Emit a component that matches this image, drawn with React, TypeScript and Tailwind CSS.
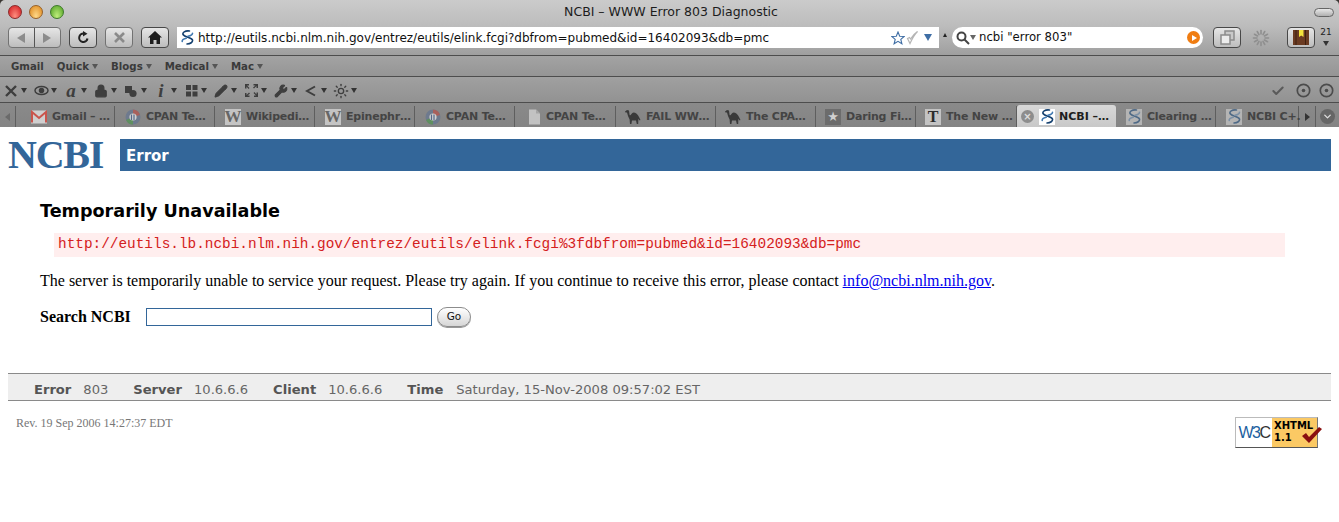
import { ReactNode } from 'react';
import { ChevronDown, Wrench, Pencil, Sun, Lock, Check } from 'lucide-react';

const chrome = "font-['DejaVu_Sans',sans-serif]";

function Helix({ faded = false }: { faded?: boolean }) {
  const dark = faded ? '#4f6a86' : '#14406f';
  const light = faded ? '#7b90a6' : '#3f78b0';
  return (
    <span className={`flex h-4 w-4 shrink-0 items-center justify-center ${faded ? 'bg-[#b4b4b4]' : 'bg-white'}`}>
      <svg width="15" height="15" viewBox="0 0 15 15" fill="none" strokeWidth="1.6" strokeLinecap="round">
        <path d="M9.5 1C5 .5 2 2.5 3.2 4.8C5 7.5 11.5 7 12.5 10C13 12 10.5 14 7 14" stroke={dark} />
        <path d="M12.5 3.2C12.5 5 10 5.8 8 6.3" stroke={light} />
        <path d="M2.2 11.5C2 9.8 4 8.8 6.2 8.3" stroke={light} />
      </svg>
    </span>
  );
}

function Camel() {
  return (
    <svg width="16" height="16" viewBox="0 0 16 16" className="shrink-0" fill="#3a3a3a">
      <path d="M0 2.5L2 1L4 1.5L4.6 6C5.5 7.5 6.5 4 8.5 3.5C10.5 3.5 13 5.5 14 8L15.5 11L14.6 11.5L13.4 9.8L13.2 15H11.8L11 11.5H7L6.4 15H5L4.6 10.5L3 7L2 3.6L.5 3.6Z" />
    </svg>
  );
}

function Gmail() {
  return (
    <svg width="16" height="14" viewBox="0 0 16 14" className="shrink-0">
      <rect width="16" height="13" y="0.5" fill="#cfcfcf" />
      <path d="M1 12.5V2L8 8L15 2V12.5" fill="none" stroke="#c9544c" strokeWidth="2" />
    </svg>
  );
}

function Planet() {
  return (
    <svg width="16" height="16" viewBox="0 0 16 16" className="shrink-0">
      <circle cx="8" cy="8" r="7.5" fill="#6e7a8e" />
      <path d="M8 .5A7.5 7.5 0 0 1 15 6L8 8Z" fill="#a8605c" />
      <path d="M1 11A7.5 7.5 0 0 0 8 15.5L8 8Z" fill="#5f8f60" />
      <circle cx="8" cy="8" r="3.6" fill="#d0d0d0" />
      <path d="M6.5 5.5V11M9 5.5V11" stroke="#56688a" strokeWidth="1.2" />
    </svg>
  );
}

function Wiki() {
  return (
    <span className="flex h-4 w-4 shrink-0 items-center justify-center bg-[#c4c4c4] font-['Liberation_Serif',serif] text-[17px] leading-none text-[#666]">
      W
    </span>
  );
}

function Doc() {
  return (
    <svg width="14" height="16" viewBox="0 0 14 16" className="ml-[2px] shrink-0">
      <path d="M2 0.5H9L13 4.5V15.5H2Z" fill="#c2c2c2" />
      <path d="M9 0.5V4.5H13" fill="#a5a5a5" />
    </svg>
  );
}

function Fireball() {
  return (
    <span className="flex h-4 w-4 shrink-0 items-center justify-center bg-[#6c6c6c] text-[13px] leading-none text-[#d0d0d0]">
      ★
    </span>
  );
}

function Nyt() {
  return (
    <span className="flex h-4 w-4 shrink-0 items-center justify-center bg-[#c3c3c3] font-['Liberation_Serif',serif] text-[16px] font-bold leading-none text-[#2c2c2c]">
      T
    </span>
  );
}

const tabs: { label: string; icon: ReactNode; width: string; pad: string }[] = [
  { label: 'Gmail – …', icon: <Gmail />, width: 'w-[99px]', pad: 'pl-[15px]' },
  { label: 'CPAN Te…', icon: <Planet />, width: 'w-[100px]', pad: 'pl-[10px]' },
  { label: 'Wikipedi…', icon: <Wiki />, width: 'w-[100px]', pad: 'pl-[10px]' },
  { label: 'Epinephr…', icon: <Wiki />, width: 'w-[100px]', pad: 'pl-[10px]' },
  { label: 'CPAN Te…', icon: <Planet />, width: 'w-[100px]', pad: 'pl-[10px]' },
  { label: 'CPAN Te…', icon: <Doc />, width: 'w-[101px]', pad: 'pl-[10px]' },
  { label: 'FAIL WW…', icon: <Camel />, width: 'w-[100px]', pad: 'pl-[9px]' },
  { label: 'The CPA…', icon: <Camel />, width: 'w-[100px]', pad: 'pl-[9px]' },
  { label: 'Daring Fi…', icon: <Fireball />, width: 'w-[100px]', pad: 'pl-[9px]' },
  { label: 'The New …', icon: <Nyt />, width: 'w-[101px]', pad: 'pl-[9px]' },
];

const tabsAfter = [
  { label: 'Clearing …', width: 'w-[100px]' },
  { label: 'NCBI C+.', width: 'w-[83px]' },
];

function ToolButton({ children, className = 'w-7', dim = false }: { children: ReactNode; className?: string; dim?: boolean }) {
  return (
    <div className={`flex h-[21px] items-center justify-center rounded-[4px] border bg-linear-to-b from-[#e6e6e6] to-[#bdbdbd] ${dim ? 'border-[#727272]' : 'border-[#484848]'} ${className}`}>
      {children}
    </div>
  );
}

function Tri({ className = 'border-t-[#4a4a4a]' }: { className?: string }) {
  return <span className={`inline-block h-0 w-0 border-x-[3.5px] border-t-[5px] border-x-transparent ${className}`} />;
}

function Dev({ children }: { children: ReactNode }) {
  return (
    <div className="flex items-center gap-[2px]">
      <span className="flex h-4 w-4 items-center justify-center text-[#3e3e3e]">{children}</span>
      <Tri className="border-t-[#333]" />
    </div>
  );
}

function Target() {
  return (
    <svg width="15" height="15" viewBox="0 0 15 15" fill="none" stroke="#4c4c4c">
      <circle cx="7.5" cy="7.5" r="6.2" strokeWidth="1.7" />
      <circle cx="7.5" cy="7.5" r="1.8" fill="#4c4c4c" stroke="none" />
    </svg>
  );
}

function Spinner() {
  return (
    <svg width="18" height="18" viewBox="0 0 18 18" stroke="#8f8f8f" strokeWidth="1.6" strokeLinecap="round">
      {[0, 30, 60, 90, 120, 150, 180, 210, 240, 270, 300, 330].map((a) => (
        <line key={a} x1="9" y1="1.5" x2="9" y2="5" transform={`rotate(${a} 9 9)`} />
      ))}
    </svg>
  );
}

function BrowserChrome() {
  return (
    <div className={`${chrome} h-[127px] overflow-hidden rounded-t-[5px] text-[#222]`}>
      {/* title */}
      <div className="grid h-[26px] grid-cols-[1fr_auto_1fr] items-center bg-linear-to-b from-[#cbcbcb] to-[#bcbcbc] pb-[2px] pl-[8px] pr-[5px]">
        <div className="flex gap-[7px]">
          <span className="h-[14px] w-[14px] rounded-full border border-[#8a2b2b] bg-radial-[at_50%_85%] from-[#ff8f80] to-[#d0161c]" />
          <span className="h-[14px] w-[14px] rounded-full border border-[#95602a] bg-radial-[at_50%_85%] from-[#ffd98a] to-[#dc8418]" />
          <span className="h-[14px] w-[14px] rounded-full border border-[#3d7a2a] bg-radial-[at_50%_85%] from-[#bfee7d] to-[#4f9f22]" />
        </div>
        <span className="whitespace-nowrap text-[12.5px] text-[#1c1c1c]">NCBI – WWW Error 803 Diagnostic</span>
        <div className="flex justify-end">
          <span className="h-[9px] w-5 rounded-full border border-[#666] bg-linear-to-b from-[#e8e8e8] to-[#b0b0b0]" />
        </div>
      </div>
      {/* nav */}
      <div className="flex h-[30px] items-start border-b border-[#4d4d4d] bg-linear-to-b from-[#bcbcbc] to-[#9f9f9f] pl-[8px] pt-px">
        <div className="flex h-[21px] w-[53px] rounded-[4px] border border-[#727272] bg-linear-to-b from-[#e6e6e6] to-[#bdbdbd]">
          <span className="flex w-1/2 items-center justify-center border-r border-[#555]">
            <span className="h-0 w-0 border-y-[5px] border-r-[8px] border-y-transparent border-r-[#8c8c8c]" />
          </span>
          <span className="flex w-1/2 items-center justify-center">
            <span className="h-0 w-0 border-y-[5px] border-l-[8px] border-y-transparent border-l-[#8c8c8c]" />
          </span>
        </div>
        <ToolButton className="ml-[8px] w-7">
          <svg width="13" height="13" viewBox="0 0 13 13" fill="none">
            <path d="M10.5 7.5A4.2 4.2 0 1 1 7 2.6" stroke="#222" strokeWidth="2" />
            <path d="M6 0L10.5 2.8L6 5.5Z" fill="#222" />
          </svg>
        </ToolButton>
        <ToolButton className="ml-[8px] w-7" dim>
          <svg width="11" height="11" viewBox="0 0 11 11" stroke="#8a8a8a" strokeWidth="2.6">
            <path d="M1 1L10 10M10 1L1 10" />
          </svg>
        </ToolButton>
        <ToolButton className="ml-[8px] w-7">
          <svg width="14" height="13" viewBox="0 0 14 13" fill="#1d1d1d">
            <path d="M7 0L14 6.5H12V13H8.5V9H5.5V13H2V6.5H0Z" />
          </svg>
        </ToolButton>
        <div className="ml-2 flex h-[21px] w-[762px] items-center bg-white pl-[2px] pr-[7px] text-[12px] text-[#111]">
          <Helix />
          <span className="ml-[3px] flex-1 whitespace-nowrap">
            http://eutils.ncbi.nlm.nih.gov/entrez/eutils/elink.fcgi?dbfrom=pubmed&amp;id=16402093&amp;db=pmc
          </span>
          <svg width="14" height="14" viewBox="0 0 14 14" fill="none" stroke="#3f6ea5" strokeWidth="1.1" className="-ml-[2px]">
            <path d="M7 1L8.7 5.2L13.2 5.5L9.8 8.4L10.9 12.8L7 10.4L3.1 12.8L4.2 8.4L.8 5.5L5.3 5.2Z" />
          </svg>
          <svg width="13" height="15" viewBox="0 0 13 15" fill="none" stroke="#b5b5b5" strokeWidth="1.2" className="ml-px">
            <path d="M1.5 8.5L4 13.5C6 9 8.5 4.5 11.5 1.5C8.5 3.5 6 6.5 4.5 9L3.5 7.5Z" />
          </svg>
          <span className="ml-[5px] h-0 w-0 border-x-[4.5px] border-t-[7px] border-x-transparent border-t-[#3f6ea5]" />
        </div>
        <span className="ml-[4px] mt-[6px] h-0 w-0 border-x-[2.5px] border-b-[4px] border-x-transparent border-b-[#222]" />
        <div className="ml-[5px] flex h-[21px] w-[251px] items-center rounded-full bg-white pl-[4px] pr-[3px] text-[11.7px] text-[#111]">
          <svg width="14" height="14" viewBox="0 0 14 14" fill="none" stroke="#444" strokeWidth="2">
            <circle cx="5.5" cy="5.5" r="4" />
            <path d="M8.5 8.5L13 13" />
          </svg>
          <Tri className="border-t-[#666]" />
          <span className="ml-[3px] flex-1 whitespace-nowrap">ncbi &quot;error 803&quot;</span>
          <span className="flex h-[13px] w-[13px] items-center justify-center rounded-full bg-[#f07d12]">
            <span className="ml-px h-0 w-0 border-y-[3.5px] border-l-[5px] border-y-transparent border-l-white" />
          </span>
        </div>
        <ToolButton className="ml-[10px] w-7">
          <svg width="15" height="15" viewBox="0 0 15 15" fill="none" stroke="#8c8c8c" strokeWidth="1.5">
            <rect x="5" y="1" width="9" height="9" fill="#c9c9c9" />
            <rect x="1" y="5" width="9" height="9" fill="#ececec" />
          </svg>
        </ToolButton>
        <span className="ml-[11px] mt-[2px]">
          <Spinner />
        </span>
        <ToolButton className="ml-[17px] w-7">
          <svg width="16" height="15" viewBox="0 0 16 15">
            <rect width="16" height="15" fill="#6b3b22" />
            <path d="M3 0V15M12.5 0V15" stroke="#3f2010" />
            <path d="M6 0H10.5V7L8.2 5.5L6 7Z" fill="#f4e23c" />
          </svg>
        </ToolButton>
        <div className="ml-[5px] flex w-3 flex-col items-center gap-[3px] text-[9px] leading-[11px] text-[#222]">
          <span>21</span>
          <Tri className="border-t-[#333]" />
        </div>
      </div>
      {/* bookmarks */}
      <div className="flex h-[21px] items-center gap-[13px] border-b border-[#4d4d4d] bg-linear-to-b from-[#a3a3a3] to-[#959595] pl-[11px] pt-px text-[10.2px] font-bold text-[#3a3a3a]">
        <span>Gmail</span>
        {['Quick', 'Blogs', 'Medical', 'Mac'].map((b) => (
          <span key={b} className="flex items-center gap-[3px]">
            {b}
            <Tri className="border-t-[#555]" />
          </span>
        ))}
      </div>
      {/* web developer bar */}
      <div className="flex h-[26px] items-center gap-[6px] border-b border-[#4d4d4d] bg-linear-to-b from-[#a0a0a0] to-[#929292] pl-[3px] pr-[5px] pt-[2px]">
        <Dev>
          <svg width="12" height="12" viewBox="0 0 12 12" stroke="#3e3e3e" strokeWidth="2.4">
            <path d="M1 1L11 11M11 1L1 11" />
          </svg>
        </Dev>
        <Dev>
          <svg width="15" height="11" viewBox="0 0 15 11" fill="none" stroke="#3e3e3e" strokeWidth="1.5">
            <ellipse cx="7.5" cy="5.5" rx="6.5" ry="4" />
            <circle cx="7.5" cy="5.5" r="2" fill="#3e3e3e" />
          </svg>
        </Dev>
        <Dev>
          <span className="font-['Liberation_Serif',serif] text-[19px] font-bold italic leading-none">a</span>
        </Dev>
        <Dev>
          <Lock size={14} fill="#3e3e3e" strokeWidth={2} />
        </Dev>
        <Dev>
          <svg width="14" height="14" viewBox="0 0 14 14" fill="#3e3e3e">
            <rect x="1" y="2" width="7" height="7" />
            <circle cx="9" cy="9.5" r="3.6" />
          </svg>
        </Dev>
        <Dev>
          <span className="font-['Liberation_Serif',serif] text-[19px] font-bold italic leading-none">i</span>
        </Dev>
        <Dev>
          <svg width="13" height="13" viewBox="0 0 13 13" fill="#3e3e3e">
            <rect width="5" height="5" x="1" y="1" />
            <rect width="5" height="5" x="7.5" y="1" />
            <rect width="5" height="5" x="1" y="7.5" />
            <rect width="5" height="5" x="7.5" y="7.5" />
          </svg>
        </Dev>
        <Dev>
          <Pencil size={14} fill="#3e3e3e" />
        </Dev>
        <Dev>
          <svg width="15" height="15" viewBox="0 0 15 15" fill="#3e3e3e">
            <path d="M1 1H5V2.5H3L5.5 5L4.5 6L2.5 3.5V5.5H1ZM14 1V5H12.5V3L10 5.5L9 4.5L11.5 2.5H9.5V1ZM1 14V10H2.5V12L5 9.5L6 10.5L3.5 12.5H5.5V14ZM14 14H10V12.5H12L9.5 10L10.5 9L12.5 11.5V9.5H14Z" />
          </svg>
        </Dev>
        <Dev>
          <Wrench size={14} fill="#3e3e3e" />
        </Dev>
        <Dev>
          <svg width="12" height="12" viewBox="0 0 12 12" fill="none" stroke="#3e3e3e" strokeWidth="2">
            <path d="M10 1.5L2 6L10 10.5" />
          </svg>
        </Dev>
        <Dev>
          <Sun size={16} strokeWidth={2} />
        </Dev>
        <div className="ml-auto flex items-center gap-2">
          <Check size={14} strokeWidth={3.5} className="mr-[3px] text-[#5a5a5a]" />
          <Target />
          <Target />
        </div>
      </div>
      {/* tabs */}
      <div className="flex h-[24px] bg-linear-to-b from-[#8a8a8a] to-[#848484] pt-[3px] text-[11px] font-bold text-[#444]">
        <div className="flex w-[16px] shrink-0 items-center justify-center border-r border-[#5e5e5e]">
          <span className="h-0 w-0 border-y-[4px] border-r-[5px] border-y-transparent border-r-[#6a6a6a]" />
        </div>
        {tabs.map((t, i) => (
          <div key={i} className={`flex shrink-0 items-center gap-[5px] border-r border-[#5e5e5e] ${t.pad} ${t.width}`}>
            {t.icon}
            <span className="whitespace-nowrap pt-px tracking-[-0.2px]">{t.label}</span>
          </div>
        ))}
        <div className="-mt-px flex w-[99px] shrink-0 items-center rounded-t-[3px] bg-linear-to-b from-[#d8d8d8] to-[#c8c8c8] pl-1 pt-px text-[#1e1e1e]">
          <span className="flex h-[13px] w-[13px] items-center justify-center rounded-full bg-[#8d8d8d] text-[10px] leading-none text-[#ddd]">×</span>
          <span className="ml-[5px]">
            <Helix />
          </span>
          <span className="ml-1 whitespace-nowrap pt-px">NCBI –…</span>
        </div>
        {tabsAfter.map((t) => (
          <div key={t.label} className={`flex shrink-0 items-center gap-[5px] border-r border-[#5e5e5e] pl-[10px] ${t.width}`}>
            <Helix faded />
            <span className="whitespace-nowrap pt-px tracking-[-0.2px]">{t.label}</span>
          </div>
        ))}
        <div className="flex w-[17px] shrink-0 items-center justify-center border-r border-[#5e5e5e]">
          <span className="h-0 w-0 border-y-[4px] border-l-[5px] border-y-transparent border-l-[#333]" />
        </div>
        <div className="flex flex-1 items-center justify-center">
          <span className="flex h-[15px] w-[15px] items-center justify-center rounded-full bg-[#666]">
            <ChevronDown size={11} strokeWidth={3} className="text-[#ddd]" />
          </span>
        </div>
      </div>
    </div>
  );
}

function Badge() {
  return (
    <div className="mt-px flex h-[31px] w-[83px] border border-[#bbb] border-b-[#555] border-r-[#777] bg-white">
      <span className="flex w-[36px] items-center justify-center overflow-hidden bg-white font-['Liberation_Sans',sans-serif] text-[16px] leading-none tracking-[-1.5px] text-[#1c5f9f]">
        W3<span className="text-[#333]">C</span>
      </span>
      <div className="relative flex flex-1 flex-col justify-start bg-[#fbc964] pl-[2px] pt-[2px] font-['DejaVu_Sans',sans-serif] text-[10px] font-bold leading-[12px] text-black">
        <span>XHTML</span>
        <span>1.1</span>
        <svg width="22" height="18" viewBox="0 0 22 18" className="absolute -right-[6px] top-[8px]">
          <path d="M1 10L5 7L8 11L18 1L21 3L8 17Z" fill="#8a0f0f" />
        </svg>
      </div>
    </div>
  );
}

export default function App() {
  return (
    <div className="h-[522px] w-[1339px] overflow-hidden bg-[#3a3632]">
      <BrowserChrome />
      <div className="h-[395px] bg-white px-[8px] text-black">
        <div className="flex h-[45px] items-start pt-[12px]">
          <div className="w-[112px] shrink-0 font-['Liberation_Serif',serif] text-[40px] font-bold leading-[32px] tracking-[-1.2px] text-[#336699]">
            NCBI
          </div>
          <div className="flex h-[32px] flex-1 items-center bg-[#336699] pl-[6px] pt-[2px] font-['DejaVu_Sans',sans-serif] text-[15px] font-bold text-white">
            Error
          </div>
        </div>
        <div className="pl-[32px] pr-[46px] pt-[28px]">
          <h1 className="font-['DejaVu_Sans',sans-serif] text-[17.6px] font-bold leading-[22px]">Temporarily Unavailable</h1>
          <div className="ml-[14px] mt-[11px] flex h-[24px] items-center bg-[#ffeeee] pl-[4px] font-['Liberation_Mono',monospace] text-[14.4px] text-[#d42020]">
            http://eutils.lb.ncbi.nlm.nih.gov/entrez/eutils/elink.fcgi%3fdbfrom=pubmed&amp;id=16402093&amp;db=pmc
          </div>
          <p className="mt-[14px] whitespace-nowrap font-['Liberation_Serif',serif] text-[16px] leading-[20px]">
            The server is temporarily unable to service your request. Please try again. If you continue to receive this error, please contact{' '}
            <a className="text-[#0000ee] underline">info@ncbi.nlm.nih.gov</a>.
          </p>
          <div className="mt-[14px] flex items-center font-['Liberation_Serif',serif] text-[16px] font-bold">
            <span className="w-[106px]">Search NCBI</span>
            <span className="block h-[18px] w-[286px] border border-[#336699] bg-white" />
            <span className="ml-[5px] flex h-[20px] w-[34px] items-center justify-center rounded-full border border-[#8c8c8c] bg-linear-to-b from-white to-[#d6d6d6] font-['DejaVu_Sans',sans-serif] text-[10.5px] font-normal text-[#111] shadow-[0_1px_0_#999]">
              Go
            </span>
          </div>
        </div>
        <div className="mt-[44px] flex h-[28px] items-center border-y border-[#8a8a8a] bg-[#eeeeee] pl-[26px] pt-[5px] font-['DejaVu_Sans',sans-serif] text-[13.1px] text-[#666]">
          <b className="text-[#555]">Error</b>
          <span className="ml-[12px]">803</span>
          <b className="ml-[25px] text-[#555]">Server</b>
          <span className="ml-[12px]">10.6.6.6</span>
          <b className="ml-[25px] text-[#555]">Client</b>
          <span className="ml-[12px]">10.6.6.6</span>
          <b className="ml-[25px] text-[#555]">Time</b>
          <span className="ml-[13px]">Saturday, 15-Nov-2008 09:57:02 EST</span>
        </div>
        <div className="flex items-start justify-between pl-[8px] pr-[13px] pt-[15px]">
          <span className="font-['Liberation_Serif',serif] text-[12px] leading-[14px] text-[#777]">Rev. 19 Sep 2006 14:27:37 EDT</span>
          <Badge />
        </div>
      </div>
    </div>
  );
}
